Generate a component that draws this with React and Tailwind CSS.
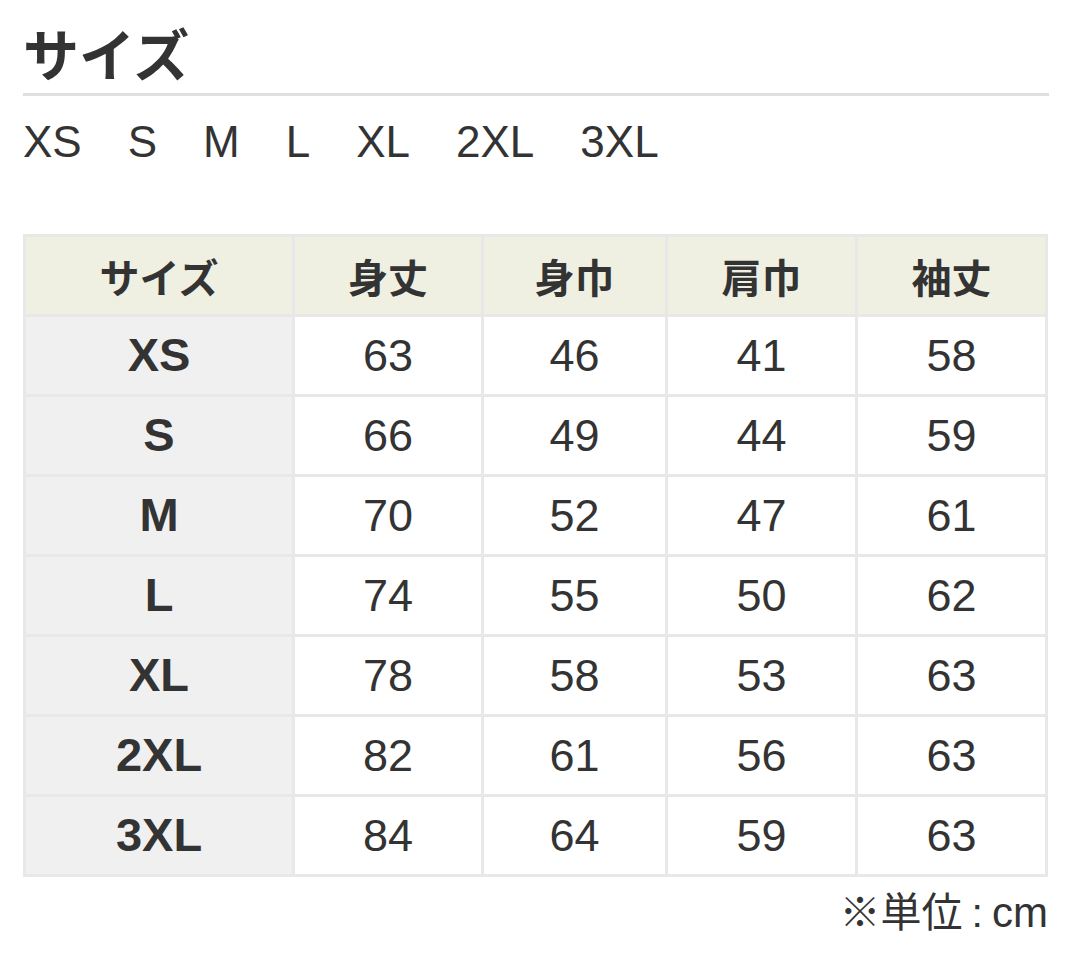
const sizes = ["XS", "S", "M", "L", "XL", "2XL", "3XL"];

const headers = ["サイズ", "身丈", "身巾", "肩巾", "袖丈"];

const rows = [
  ["XS", 63, 46, 41, 58],
  ["S", 66, 49, 44, 59],
  ["M", 70, 52, 47, 61],
  ["L", 74, 55, 50, 62],
  ["XL", 78, 58, 53, 63],
  ["2XL", 82, 61, 56, 63],
  ["3XL", 84, 64, 59, 63],
];

export default function App() {
  return (
    <div className="w-[1072px] min-h-[961px] bg-white px-[23px] pt-[24px] text-[#333] font-['Liberation_Sans','Noto_Sans_CJK_JP',sans-serif]">
      <h1 className="text-[56px] leading-none font-bold pb-[13px] border-b-[3px] border-[#e0e0e0] font-['Noto_Sans_CJK_JP',sans-serif]">
        サイズ
      </h1>

      <div className="mt-[24px] flex gap-[46px] text-[44px] leading-none">
        {sizes.map((s) => (
          <span key={s}>{s}</span>
        ))}
      </div>

      {/* size table */}
      <div className="mt-[70px] grid grid-cols-[266px_186px_181px_187px_187px] gap-[3px] p-[3px] bg-[#e8e8e8] w-[1025px]">
        {headers.map((h) => (
          <div
            key={h}
            className="h-[77px] bg-[#efefe2] flex items-center justify-center text-[40px] leading-none font-bold font-['Noto_Sans_CJK_JP',sans-serif]"
          >
            {h}
          </div>
        ))}
        {rows.map((r) =>
          r.map((v, i) =>
            i === 0 ? (
              <div key={`${r[0]}-${i}`} className="h-[77px] bg-[#f0f0f0] flex items-center justify-center text-[47px] font-bold">
                {v}
              </div>
            ) : (
              <div key={`${r[0]}-${i}`} className="h-[77px] bg-white flex items-center justify-center text-[45px]">
                {v}
              </div>
            )
          )
        )}
      </div>

      <div className="w-[1025px] mt-[12px] flex justify-end items-baseline text-[41px] leading-none">
        <span className="font-['Noto_Sans_CJK_JP',sans-serif]">※単位</span>
        <span className="mx-[9px]">:</span>
        <span className="text-[42px]">cm</span>
      </div>
    </div>
  );
}
